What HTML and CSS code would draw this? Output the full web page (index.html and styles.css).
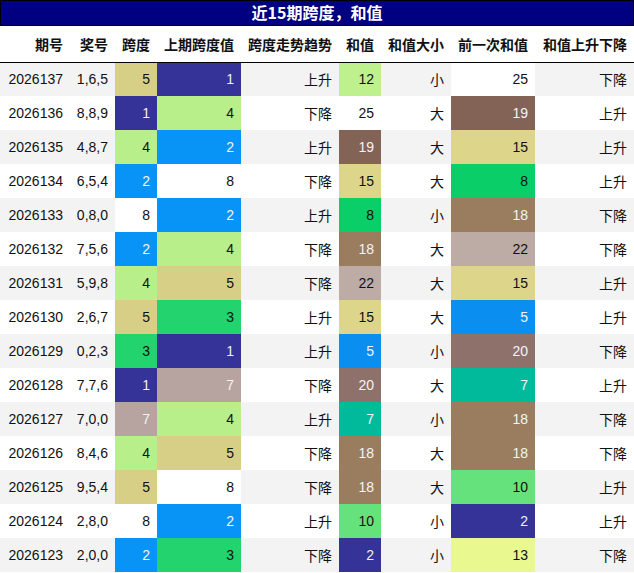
FILE: index.html
```html
<!DOCTYPE html>
<html lang="zh">
<head>
<meta charset="utf-8">
<title>近15期跨度，和值</title>
<link rel="stylesheet" href="styles.css">
</head>
<body>
<div class="titlebar">近15期跨度，和值</div>
<table class="grid">
  <colgroup>
    <col class="w70"><col class="w45"><col class="w42"><col class="w84"><col class="w98"><col class="w42"><col class="w70"><col class="w84"><col class="w99">
  </colgroup>
  <thead>
    <tr class="head">
      <th>期号</th><th>奖号</th><th>跨度</th><th>上期跨度值</th><th>跨度走势趋势</th><th>和值</th><th>和值大小</th><th>前一次和值</th><th>和值上升下降</th>
    </tr>
  </thead>
  <tbody>
    <tr class="odd"><td>2026137</td><td>1,6,5</td><td class="k5">5</td><td class="k1">1</td><td>上升</td><td class="s12">12</td><td>小</td><td class="none">25</td><td>下降</td></tr>
    <tr><td>2026136</td><td>8,8,9</td><td class="k1">1</td><td class="k4">4</td><td>下降</td><td class="none">25</td><td>大</td><td class="s19">19</td><td>上升</td></tr>
    <tr class="odd"><td>2026135</td><td>4,8,7</td><td class="k4">4</td><td class="k2">2</td><td>上升</td><td class="s19">19</td><td>大</td><td class="s15">15</td><td>上升</td></tr>
    <tr><td>2026134</td><td>6,5,4</td><td class="k2">2</td><td class="none">8</td><td>下降</td><td class="s15">15</td><td>大</td><td class="s8">8</td><td>上升</td></tr>
    <tr class="odd"><td>2026133</td><td>0,8,0</td><td class="none">8</td><td class="k2">2</td><td>上升</td><td class="s8">8</td><td>小</td><td class="s18">18</td><td>下降</td></tr>
    <tr><td>2026132</td><td>7,5,6</td><td class="k2">2</td><td class="k4">4</td><td>下降</td><td class="s18">18</td><td>大</td><td class="s22">22</td><td>下降</td></tr>
    <tr class="odd"><td>2026131</td><td>5,9,8</td><td class="k4">4</td><td class="k5">5</td><td>下降</td><td class="s22">22</td><td>大</td><td class="s15">15</td><td>上升</td></tr>
    <tr><td>2026130</td><td>2,6,7</td><td class="k5">5</td><td class="k3">3</td><td>上升</td><td class="s15">15</td><td>大</td><td class="s5">5</td><td>上升</td></tr>
    <tr class="odd"><td>2026129</td><td>0,2,3</td><td class="k3">3</td><td class="k1">1</td><td>上升</td><td class="s5">5</td><td>小</td><td class="s20">20</td><td>下降</td></tr>
    <tr><td>2026128</td><td>7,7,6</td><td class="k1">1</td><td class="k7">7</td><td>下降</td><td class="s20">20</td><td>大</td><td class="s7">7</td><td>上升</td></tr>
    <tr class="odd"><td>2026127</td><td>7,0,0</td><td class="k7">7</td><td class="k4">4</td><td>上升</td><td class="s7">7</td><td>小</td><td class="s18">18</td><td>下降</td></tr>
    <tr><td>2026126</td><td>8,4,6</td><td class="k4">4</td><td class="k5">5</td><td>下降</td><td class="s18">18</td><td>大</td><td class="s18">18</td><td>下降</td></tr>
    <tr class="odd"><td>2026125</td><td>9,5,4</td><td class="k5">5</td><td class="none">8</td><td>下降</td><td class="s18">18</td><td>大</td><td class="s10">10</td><td>上升</td></tr>
    <tr><td>2026124</td><td>2,8,0</td><td class="none">8</td><td class="k2">2</td><td>上升</td><td class="s10">10</td><td>小</td><td class="s2">2</td><td>上升</td></tr>
    <tr class="odd"><td>2026123</td><td>2,0,0</td><td class="k2">2</td><td class="k3">3</td><td>下降</td><td class="s2">2</td><td>小</td><td class="s13">13</td><td>下降</td></tr>
  </tbody>
</table>
</body>
</html>
```

FILE: styles.css
```css
html, body {
  margin: 0;
  padding: 0;
  background: #ffffff;
}

.titlebar {
  width: 634px;
  height: 26px;
  box-sizing: border-box;
  background: #000080;
  color: #ffffff;
  border: 1px solid #000000;
  font-family: "Noto Sans CJK SC", sans-serif;
  font-weight: bold;
  font-size: 16px;
  line-height: 23px;
  text-align: center;
}

.grid {
  width: 634px;
  border-collapse: collapse;
  border-spacing: 0;
  table-layout: fixed;
  font-family: "Liberation Sans", "Noto Sans CJK SC", sans-serif;
  font-size: 14px;
  color: #111111;
}

.w70 { width: 70px; }
.w45 { width: 45px; }
.w42 { width: 42px; }
.w84 { width: 84px; }
.w98 { width: 98px; }
.w99 { width: 99px; }

.head th {
  height: 36px;
  box-sizing: border-box;
  padding: 0 7px 0 0;
  text-align: right;
  font-family: "Noto Sans CJK SC", sans-serif;
  font-weight: bold;
  font-size: 14px;
  color: #111111;
  border-bottom: 1px solid #000000;
  white-space: nowrap;
}

td {
  height: 34px;
  padding: 0 7px 0 0;
  text-align: right;
  white-space: nowrap;
  box-sizing: border-box;
}

tbody tr.odd { background: #f3f3f3; }

.none { background: #ffffff; }

/* span colours */
.k1 { background: #353397; color: #f0f0f0; }
.k2 { background: #0894f6; color: #f4f4f4; }
.k3 { background: #23d46e; }
.k4 { background: #b8ef8b; }
.k5 { background: #d8cf87; }
.k7 { background: #b7a39f; color: #f4f4f4; }

/* sum colours */
.s2 { background: #353397; color: #f0f0f0; }
.s5 { background: #0a8ef0; color: #f4f4f4; }
.s7 { background: #00bb9b; color: #f4f4f4; }
.s8 { background: #0acf68; }
.s10 { background: #66e27c; }
.s12 { background: #bff08e; }
.s13 { background: #e9f88f; }
.s15 { background: #ddd68a; }
.s18 { background: #9a7d5f; color: #f4f4f4; }
.s19 { background: #846357; color: #f4f4f4; }
.s20 { background: #8f716b; color: #f4f4f4; }
.s22 { background: #bdaba5; }
```
